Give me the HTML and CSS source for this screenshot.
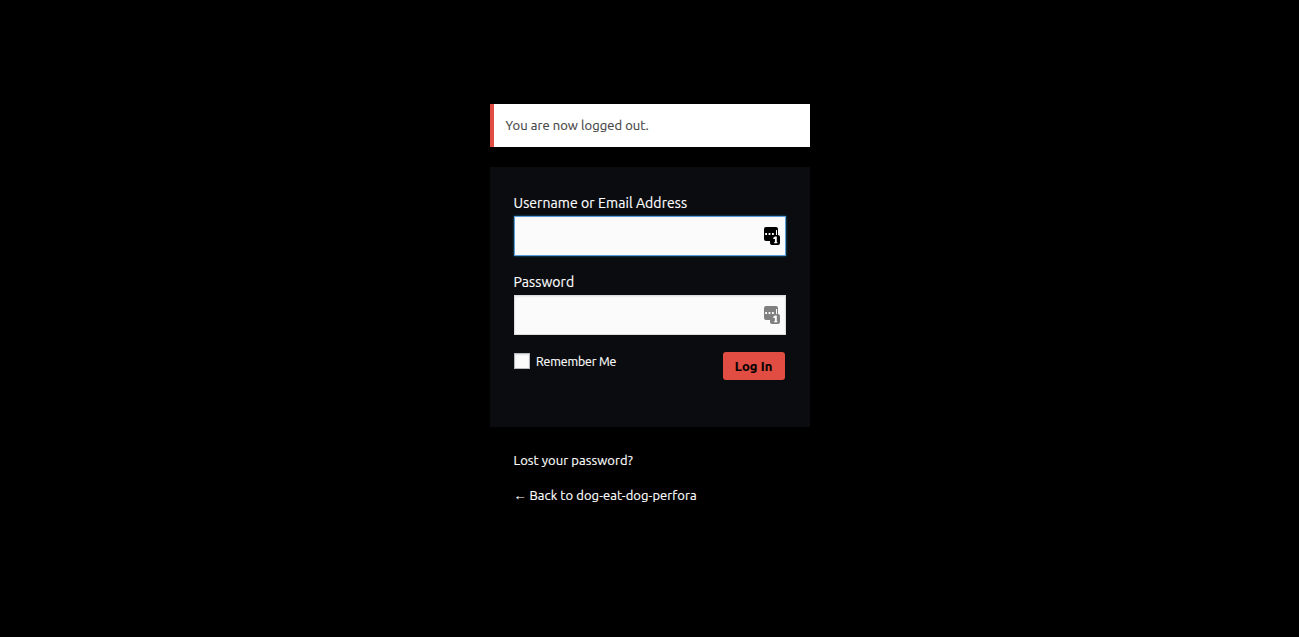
FILE: index.html
```html
<!DOCTYPE html>
<html lang="en">
<head>
<meta charset="utf-8">
<title>Log In</title>
<link rel="stylesheet" href="styles.css">
</head>
<body>
<svg class="sprite" width="0" height="0" aria-hidden="true">
  <symbol id="manager" viewBox="0 0 16 18">
    <path fill="currentColor" d="M2 0H12Q14 0 14 2V8H14Q16 8 16 10V16Q16 18 14 18H8Q6 18 6 16V14H2Q0 14 0 12V2Q0 0 2 0Z"/>
    <path fill="#fbfbfb" d="M1.2 6h1.8v2H1.2zM4.6 6h1.8v2H4.6zM8 6h1.8v2H8zM12 3h1v5h-1z"/>
    <path fill="#fbfbfb" d="M11 9.6H12.8V15.2H13.4V16.2H10V15.2H10.9V12H9.3V10.8Z"/>
  </symbol>
</svg>
<main class="login">
  <p class="message">You are now logged out.</p>
  <form class="login-form">
    <label class="field-label user-label" for="user">Username or Email Address</label>
    <div class="field focused"><input id="user" class="input" type="text"><svg class="manager"><use href="#manager"/></svg></div>
    <label class="field-label" for="pass">Password</label>
    <div class="field"><input id="pass" class="input" type="password"><svg class="manager muted"><use href="#manager"/></svg></div>
    <div class="actions">
      <label class="remember"><input class="checkbox" type="checkbox"><span class="remember-text">Remember Me</span></label>
      <button class="submit" type="button"><span>Log In</span></button>
    </div>
  </form>
  <nav class="links">
    <a class="link lost">Lost your password?</a>
    <a class="link back"><span class="arrow">←</span><span>Back to dog-eat-dog-perfora</span></a>
  </nav>
</main>
</body>
</html>
```
FILE: styles.css
```css
* { box-sizing: border-box; }
body { margin: 0; min-height: 637px; background: #000; font-family: Ubuntu, "Noto Sans", "Open Sans", sans-serif; font-size: 13px; color: #fff; -webkit-text-stroke: 0.15px; }
.sprite { display: block; }
.login { width: 320px; margin: 0 auto; padding-top: 104px; }
.message { margin: 0 0 20px; height: 43px; padding: 12px; border-left: 4px solid #e14d43; background: #fff; color: #444; font-size: 13px; line-height: 19px; letter-spacing: 0.06px; }
.login-form { height: 260px; padding: 26px 24px 46px; background: #0b0c10; }
.field-label { display: block; height: 23px; font-size: 14px; line-height: 20px; letter-spacing: 0.08px; white-space: nowrap; }
.field { display: flex; align-items: center; width: 272px; height: 40px; margin-bottom: 16px; padding-right: 5px; background: #fbfbfb; border: 1px solid #ddd; box-shadow: inset 0 1px 2px rgba(0,0,0,.07); }
.focused { border-color: #5b9dd9; box-shadow: 0 0 2px rgba(30,140,190,.8); }
.input { flex: 1; min-width: 0; height: 36px; padding: 0 3px; border: 0; outline: 0; background: transparent; }
.manager { width: 16px; height: 18px; color: #000; }
.manager.muted { color: #808080; }
.actions { display: flex; justify-content: space-between; padding: 1px 1px 0 0; }
.remember { display: flex; align-items: center; height: 18px; gap: 6.5px; font-size: 12.3px; }
.checkbox { appearance: none; width: 16px; height: 16px; margin: 0; background: #fbfbfb; border: 1px solid #b4b9be; box-shadow: inset 0 1px 2px rgba(0,0,0,.1); }
.remember-text { letter-spacing: -0.1px; }
.submit { width: 62px; height: 28px; padding: 0; border: 0; border-radius: 3px; background: #e14d43; color: #000; font: bold 13px/28px Ubuntu, "Noto Sans", sans-serif; letter-spacing: 0.06px; }
.links { display: flex; flex-direction: column; gap: 16px; padding: 24px 24px 0; }
.link { display: flex; height: 19px; font-size: 13px; line-height: 19px; letter-spacing: 0.07px; white-space: nowrap; }
.arrow { width: 16px; font-size: 13px; line-height: 19px; }
```
